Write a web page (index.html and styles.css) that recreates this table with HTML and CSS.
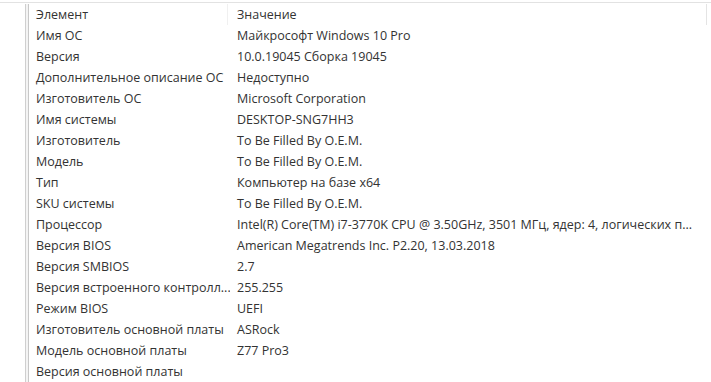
FILE: index.html
```html
<!DOCTYPE html>
<html lang="ru">
<head>
<meta charset="utf-8">
<title>Сведения о системе</title>
<link rel="stylesheet" href="styles.css">
</head>
<body>
<div class="window">
  <div class="tree"></div>
  <div class="splitter"></div>
  <div class="list">
    <div class="header">
      <div class="hcell col1">Элемент</div>
      <div class="hcell col2">Значение</div>
      <div class="hcell rest"></div>
    </div>
    <div class="rows">
      <div class="row"><span class="c1">Имя ОС</span><span class="c2">Майкрософт Windows 10 Pro</span></div>
      <div class="row"><span class="c1">Версия</span><span class="c2">10.0.19045 Сборка 19045</span></div>
      <div class="row"><span class="c1">Дополнительное описание ОС</span><span class="c2">Недоступно</span></div>
      <div class="row"><span class="c1">Изготовитель ОС</span><span class="c2">Microsoft Corporation</span></div>
      <div class="row"><span class="c1">Имя системы</span><span class="c2">DESKTOP-SNG7HH3</span></div>
      <div class="row"><span class="c1">Изготовитель</span><span class="c2">To Be Filled By O.E.M.</span></div>
      <div class="row"><span class="c1">Модель</span><span class="c2">To Be Filled By O.E.M.</span></div>
      <div class="row"><span class="c1">Тип</span><span class="c2">Компьютер на базе x64</span></div>
      <div class="row"><span class="c1">SKU системы</span><span class="c2">To Be Filled By O.E.M.</span></div>
      <div class="row"><span class="c1">Процессор</span><span class="c2">Intel(R) Core(TM) i7-3770K CPU @ 3.50GHz, 3501 МГц, ядер: 4, логических п...</span></div>
      <div class="row"><span class="c1">Версия BIOS</span><span class="c2">American Megatrends Inc. P2.20, 13.03.2018</span></div>
      <div class="row"><span class="c1">Версия SMBIOS</span><span class="c2">2.7</span></div>
      <div class="row"><span class="c1">Версия встроенного контролл...</span><span class="c2">255.255</span></div>
      <div class="row"><span class="c1">Режим BIOS</span><span class="c2">UEFI</span></div>
      <div class="row"><span class="c1">Изготовитель основной платы</span><span class="c2">ASRock</span></div>
      <div class="row"><span class="c1">Модель основной платы</span><span class="c2">Z77 Pro3</span></div>
      <div class="row"><span class="c1">Версия основной платы</span><span class="c2"></span></div>
    </div>
  </div>
</div>
</body>
</html>
```
FILE: styles.css
```css
html, body {
  margin: 0;
  padding: 0;
  background: #ffffff;
}
body {
  width: 711px;
  height: 382px;
  overflow: hidden;
  font-family: "Open Sans", "Noto Sans", sans-serif;
  font-size: 12.5px;
  color: #333333;
}
.window {
  display: flex;
  height: 100%;
  border-top: 1px solid #e2e2e2;
  margin-top: 2px;
  padding-top: 1px;
}
.tree {
  width: 25px;
  border-right: 1px solid #cfcfcf;
}
.splitter {
  width: 2px;
  background: #f4f4f4;
  border-right: 1px solid #c8c8c8;
}
.list {
  flex: 1;
  display: flex;
  flex-direction: column;
}
.header {
  display: flex;
  height: 21px;
  align-items: center;
}
.hcell {
  height: 100%;
  display: flex;
  align-items: center;
  box-sizing: border-box;
}
.col1 {
  width: 199px;
  padding-left: 7px;
  border-right: 1px solid #f0f0f0;
}
.col2 {
  width: 479px;
  padding-left: 9px;
  border-right: 1px solid #e4e4e4;
}
.rest {
  flex: 1;
}
.rows {
  display: flex;
  flex-direction: column;
}
.row {
  display: flex;
  height: 21px;
  align-items: center;
  white-space: nowrap;
}
.c1 {
  width: 201px;
  flex: none;
  padding-left: 7px;
  box-sizing: border-box;
  overflow: hidden;
}
.c2 {
  padding-left: 7px;
}
```
